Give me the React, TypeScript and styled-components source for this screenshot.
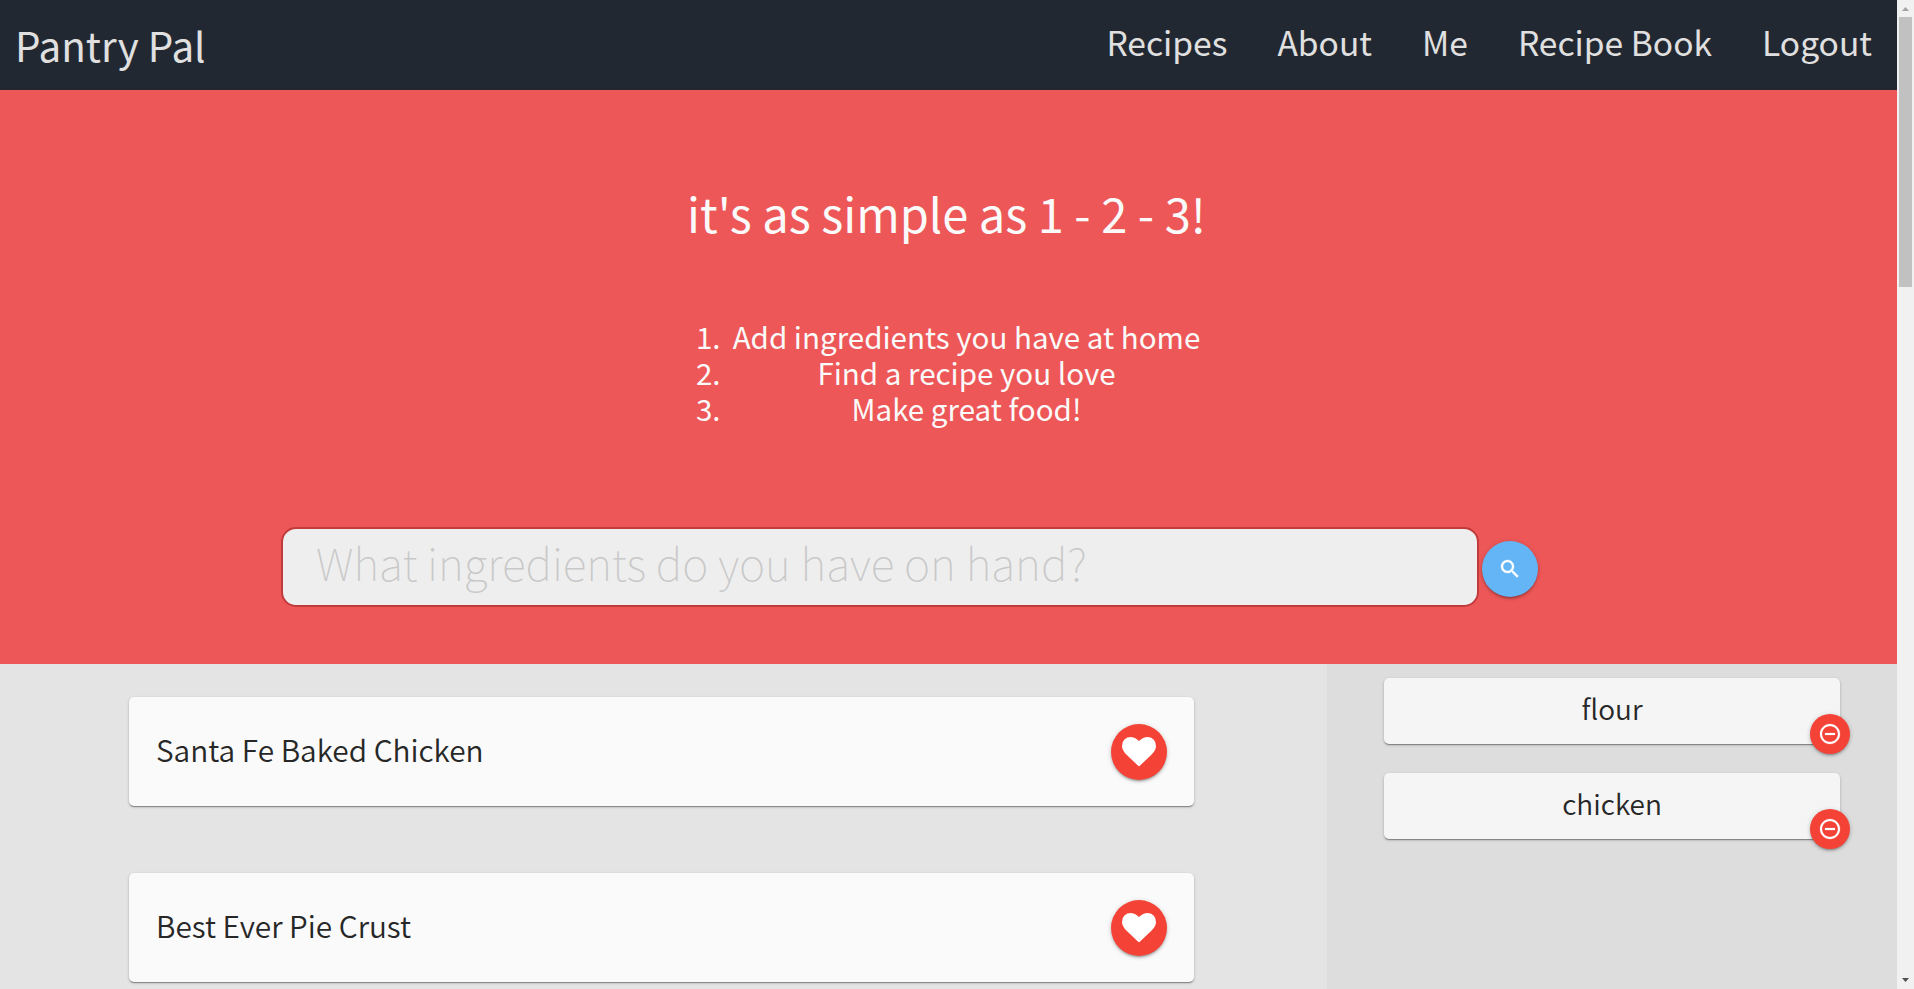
import React from 'react';
import styled, { createGlobalStyle } from 'styled-components';

const Global = createGlobalStyle`
  * { box-sizing: border-box; }
  body { margin: 0; font-family: "Noto Sans CJK SC", sans-serif; color: #272727; }
`;
const Screen = styled.div`display: flex; width: 1914px; height: 989px; overflow: hidden;`;
const Page = styled.div`width: 1897px; flex: none; display: flex; flex-direction: column;`;
const Nav = styled.header`
  height: 90px; flex: none; background: #222831; color: #e0e0e0; display: flex;
  justify-content: space-between; align-items: flex-start; padding: 0 25px 0 15px;
`;
const Brand = styled.span`font-size: 40.3px; line-height: 89px;`;
const Links = styled.nav`display: flex; gap: 50px; font-size: 33.6px; line-height: 84px;`;
const Hero = styled.section`
  height: 574px; flex: none; background: #ee5757; color: #fafafa;
  display: flex; flex-direction: column; align-items: center;
`;
const Title = styled.h1`margin: 82px 0 0; padding-right: 4px; font-size: 47px; font-weight: 400; line-height: 82px;`;
const Steps = styled.ol`
  margin: 65px 0 0; padding-left: 30.5px; font-size: 29.55px; line-height: 36px; text-align: center;
`;
const Step = styled.li`padding-left: 5.5px;`;
const Search = styled.form`display: flex; align-items: center; gap: 3px; margin: 100px 0 0 -78px;`;
const Input = styled.input`
  width: 1198px; height: 80px; border: 2px solid #c23b3b; border-radius: 15px; background: #eee;
  padding: 0 33px 11px; font: 100 44.5px "Noto Sans CJK SC", sans-serif; outline: none;
  &::placeholder { color: #c8c8c8; opacity: 1; }
`;
const RoundButton = styled.button<{ $size: number; $color: string; $drop?: number }>`
  width: ${p => p.$size}px; height: ${p => p.$size}px; flex: none; padding: 0; border: 0; border-radius: 50%;
  margin-top: ${p => p.$drop ?? 0}px;
  background: ${p => p.$color}; color: #fff; display: flex; align-items: center; justify-content: center;
  box-shadow: 0 2px 2px 0 rgba(0,0,0,.14), 0 3px 1px -2px rgba(0,0,0,.12), 0 1px 5px 0 rgba(0,0,0,.2);
`;
const Body = styled.main`flex: 1; display: flex; min-height: 0;`;
const Results = styled.section`
  width: 1327px; flex: none; background: #e4e4e4; padding: 33px 133px 0 129px;
  display: flex; flex-direction: column; gap: 67px;
`;
const cardShadow = '0 2px 1px -1px rgba(0,0,0,.2), 0 1px 1px 0 rgba(0,0,0,.14), 0 1px 3px 0 rgba(0,0,0,.22)';
const RecipeCard = styled.article`
  height: 109px; flex: none; border-radius: 5px; background: #fafafa; box-shadow: ${cardShadow};
  display: flex; align-items: center; justify-content: space-between; padding: 1px 27px 0;
`;
const RecipeName = styled.span`font-size: 29.8px; font-weight: 350; line-height: 40px; margin-top: -7px;`;
const Pantry = styled.aside`
  flex: 1; background: #ddd; padding: 14px 57px 0; display: flex; flex-direction: column; gap: 29px;
`;
const Ingredient = styled.div`
  position: relative; height: 66px; flex: none; border-radius: 5px; background: #f5f5f5; box-shadow: ${cardShadow};
  text-align: center; font-size: 28px; font-weight: 350; line-height: 60px;
`;
const RemoveSlot = styled.div`position: absolute; right: -10px; bottom: -10px;`;
const Scrollbar = styled.div`
  width: 17px; flex: none; background: #f1f1f1; display: flex; flex-direction: column; align-items: center;
`;
const Arrow = styled.svg`width: 17px; height: 17px; flex: none; display: block;`;
const Thumb = styled.div`width: 13px; height: 270px; background: #c1c1c1; margin-bottom: auto;`;

const SearchIcon = () => (
  <svg width="24" height="24" viewBox="0 0 24 24" fill="currentColor" stroke="currentColor" strokeWidth="0.35">
    <path d="M15.5 14h-.79l-.28-.27C15.41 12.59 16 11.11 16 9.5 16 5.91 13.09 3 9.5 3S3 5.91 3 9.5 5.91 16 9.5 16c1.61 0 3.09-.59 4.23-1.57l.27.28v.79l5 4.99L20.49 19l-4.99-5zm-6 0C7.01 14 5 11.99 5 9.5S7.01 5 9.5 5 14 7.01 14 9.5 11.99 14 9.5 14z" />
  </svg>
);
const HeartIcon = () => (
  <svg width="34" height="29.2" viewBox="0 128 1792 1536" fill="currentColor">
    <path d="M896 1664q-26 0-44-18l-624-602q-10-8-27.5-26T145 952.5 77 855 23.5 734 0 596q0-220 127-344t351-124q62 0 126.5 21.5t120 58T820 276t76 68q36-36 76-68t95.5-68.5 120-58T1314 128q224 0 351 124t127 344q0 221-229 450l-623 600q-18 18-44 18z" />
  </svg>
);
const RemoveIcon = () => (
  <svg width="24" height="24" viewBox="0 0 24 24" fill="currentColor" stroke="currentColor" strokeWidth="0.2">
    <path d="M7 11v2h10v-2H7zm5-9C6.48 2 2 6.48 2 12s4.48 10 10 10 10-4.48 10-10S17.52 2 12 2zm0 18c-4.41 0-8-3.59-8-8s3.59-8 8-8 8 3.59 8 8-3.59 8-8 8z" />
  </svg>
);

const links = ['Recipes', 'About', 'Me', 'Recipe Book', 'Logout'];
const steps = ['Add ingredients you have at home', 'Find a recipe you love', 'Make great food!'];
const recipes = ['Santa Fe Baked Chicken', 'Best Ever Pie Crust'];
const ingredients = ['flour', 'chicken'];

export default function App() {
  return (
    <Screen>
      <Global />
      <Page>
        <Nav>
          <Brand>Pantry Pal</Brand>
          <Links>{links.map(l => <span key={l}>{l}</span>)}</Links>
        </Nav>
        <Hero>
          <Title>it's as simple as 1 - 2 - 3!</Title>
          <Steps>{steps.map(s => <Step key={s}>{s}</Step>)}</Steps>
          <Search>
            <Input placeholder="What ingredients do you have on hand?" />
            <RoundButton type="button" aria-label="Search" $size={56} $color="#64b5f6" $drop={4}><SearchIcon /></RoundButton>
          </Search>
        </Hero>
        <Body>
          <Results>
            {recipes.map(r => (
              <RecipeCard key={r}>
                <RecipeName>{r}</RecipeName>
                <RoundButton aria-label="Save" $size={56} $color="#f44336"><HeartIcon /></RoundButton>
              </RecipeCard>
            ))}
          </Results>
          <Pantry>
            {ingredients.map(i => (
              <Ingredient key={i}>
                {i}
                <RemoveSlot>
                  <RoundButton aria-label="Remove" $size={40} $color="#f44336"><RemoveIcon /></RoundButton>
                </RemoveSlot>
              </Ingredient>
            ))}
          </Pantry>
        </Body>
      </Page>
      <Scrollbar>
        <Arrow viewBox="0 0 17 17"><path d="M5 11L8.5 7 12 11z" fill="#a3a3a3" /></Arrow>
        <Thumb />
        <Arrow viewBox="0 0 17 17"><path d="M5 6L8.5 10 12 6z" fill="#505050" /></Arrow>
      </Scrollbar>
    </Screen>
  );
}
